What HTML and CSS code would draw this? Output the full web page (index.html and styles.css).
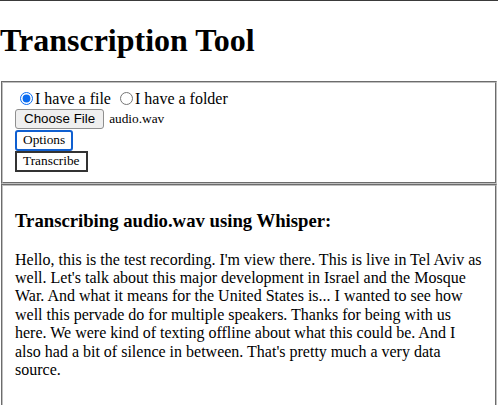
FILE: index.html
```html
<!DOCTYPE html>
<html>
<head>
<meta charset="utf-8">
<title>Transcription Tool</title>
<link rel="stylesheet" href="styles.css">
</head>
<body>
<h1 class="title">Transcription Tool</h1>
<fieldset class="panel">
  <div class="choice">
    <label><input type="radio" name="src" checked>I have a file</label>
    <label><input type="radio" name="src">I have a folder</label>
  </div>
  <div class="file-row"><button class="btn-file" type="button">Choose File</button><span class="file-name">audio.wav</span></div>
  <div class="row"><button class="btn-options" type="button">Options</button></div>
  <div class="row row-go"><button class="btn-go" type="button">Transcribe</button></div>
</fieldset>
<fieldset class="panel output">
  <h3 class="out-title">Transcribing audio.wav using Whisper:</h3>
  <p class="out-text">Hello, this is the test recording. I'm view there. This is live in Tel Aviv as well. Let's talk about this major development in Israel and the Mosque War. And what it means for the United States is... I wanted to see how well this pervade do for multiple speakers. Thanks for being with us here. We were kind of texting offline about what this could be. And I also had a bit of silence in between. That's pretty much a very data source.</p>
</fieldset>
</body>
</html>
```
FILE: styles.css
```css
html, body {
  margin: 0;
  padding: 0;
  background: #fff;
}
body {
  border-top: 1px solid #3a3a3a;
  font-family: "Liberation Serif", "Times New Roman", serif;
  font-size: 16px;
  color: #000;
}
.title {
  font-size: 32px;
  font-weight: bold;
  margin: 21px 0 22px 0;
}
.panel {
  margin: 0 1px;
  padding: 5.6px 12px 10px 12px;
  border: 2px groove #c0c0c0;
}
.choice {
  line-height: 19px;
  height: 19px;
}
.choice input {
  margin: 3px 2px 0 5px;
  accent-color: #0b6cf0;
  vertical-align: top;
  width: 13px;
  height: 13px;
}
.file-row {
  display: flex;
  align-items: center;
  height: 20px;
  margin-top: 1px;
}
.btn-file {
  font-family: "Liberation Sans", Arial, sans-serif;
  font-size: 13.33px;
  background: #efefef;
  border: 1px solid #8f8f8f;
  border-radius: 3px;
  padding: 1px 8px;
  height: 20px;
  color: #000;
}
.file-name {
  font-size: 13.33px;
  margin-left: 5px;
}
.row {
  margin-top: 1px;
  display: flex;
}
.row-go {
  margin-top: 0;
}
.btn-options, .btn-go {
  font-family: "Liberation Serif", "Times New Roman", serif;
  font-size: 13.33px;
  background: #fff;
  color: #000;
  height: 21px;
  padding: 0 6px;
}
.btn-options {
  border: 2px solid #0f5fd0;
  border-radius: 3px;
}
.btn-go {
  border: 2px solid #333;
  border-radius: 0;
}
.output {
  padding-bottom: 40px;
}
.out-title {
  font-size: 18.72px;
  margin: 18.72px 0;
}
.out-text {
  margin: 16px 0;
  line-height: 18.4px;
}
```
